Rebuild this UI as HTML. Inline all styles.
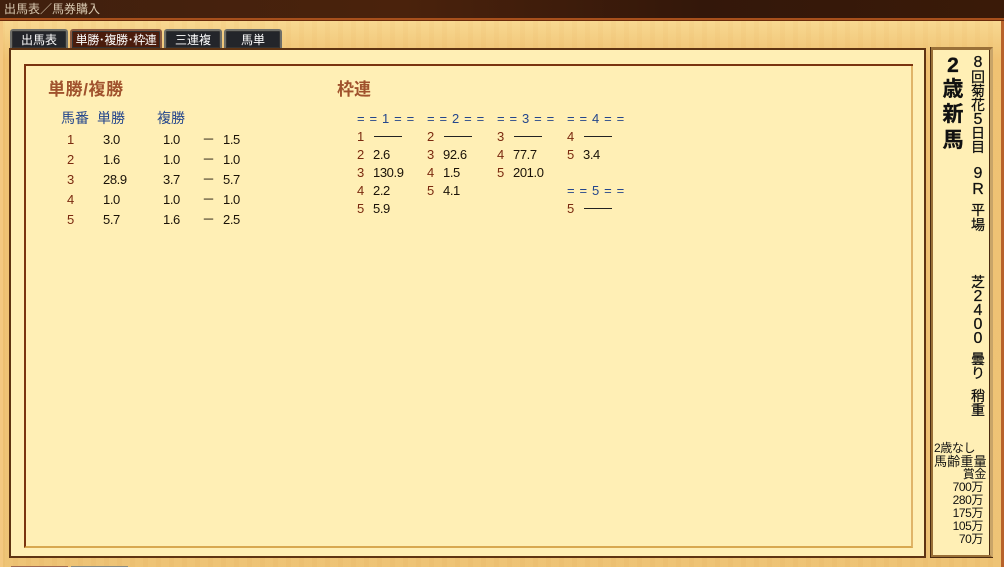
<!DOCTYPE html>
<html lang="ja">
<head>
<meta charset="utf-8">
<style>
html,body{margin:0;padding:0;}
body{width:1004px;height:567px;overflow:hidden;position:relative;background:#efc070;font-family:"Liberation Sans","Noto Sans CJK JP",sans-serif;font-size:13px;color:#1a1208;}
div{position:absolute;box-sizing:border-box;}
.t{white-space:nowrap;line-height:14px;letter-spacing:-.4px;}
.b{color:#24468c;}
.hd{font-size:14px;letter-spacing:0;}
.eq{font-size:13px;letter-spacing:.65px;}
.r{color:#7a2a10;letter-spacing:0;}
.h{font-size:17px;font-weight:bold;color:#a0522d;line-height:18px;white-space:nowrap;}
.tab{top:29px;height:19px;border-radius:3px 3px 0 0;color:#fff;text-align:center;line-height:18px;font-size:12px;white-space:nowrap;background:#23252a;border:2px solid #6e6e68;border-bottom:none;box-shadow:inset 0 0 0 1px #333;}
.ln{width:28px;height:1px;background:#222;}
.v{left:966px;width:24px;text-align:center;font-size:14px;line-height:14px;color:#111;-webkit-text-stroke:.25px #111;}
.d{font-size:16px;margin-top:1px;}
.v2{left:940px;width:26px;text-align:center;font-size:21px;font-weight:bold;line-height:24px;color:#111;-webkit-text-stroke:.3px #111;}
.s{font-size:12px;line-height:13px;white-space:nowrap;color:#111;letter-spacing:-.4px;}
</style>
</head>
<body>
<div style="left:0;top:0;width:1004px;height:567px;background:repeating-linear-gradient(90deg,rgba(190,120,40,.03) 0 5px,rgba(255,240,190,.03) 5px 13px),linear-gradient(180deg,#f8d890 20px,#efc070 60px,#eec274 100%);"></div>
<div style="left:0;top:0;width:1004px;height:18px;background:linear-gradient(90deg,#40200e,#4a220c 40%,#33170a 70%,#3a1a08);"></div>
<div style="left:0;top:18px;width:1004px;height:3px;background:#a8501c;border-bottom:1px solid #6a2a0c;"></div>
<div class="t" style="left:4px;top:2px;color:#d8c8b0;font-size:12px;letter-spacing:0;">出馬表／馬券購入</div>
<div style="left:1001px;top:21px;width:3px;height:546px;background:#b8622a;"></div>
<div style="left:0;top:21px;width:3px;height:546px;background:#f4c880;"></div>

<!-- tabs -->
<div class="tab" style="left:10px;width:58px;">出馬表</div>
<div class="tab" style="left:70px;width:92px;background:#4a1c0c;border-color:#8a5a40;letter-spacing:-.4px;">単勝･複勝･枠連</div>
<div class="tab" style="left:164px;width:58px;">三連複</div>
<div class="tab" style="left:224px;width:58px;">馬単</div>

<!-- main panel -->
<div style="left:9px;top:48px;width:917px;height:510px;background:#ffefb5;border:2px solid #5e3312;"></div>
<div style="left:24px;top:64px;width:889px;height:484px;border:2px solid #7a3410;border-right:2px solid #e0b468;border-bottom:2px solid #d8a850;background:#ffefb5;"></div>
<div style="left:911px;top:64px;width:2px;height:2px;background:#7a3410;"></div>

<div class="h" style="left:48px;top:81px;letter-spacing:.6px;">単勝/複勝</div>
<div class="h" style="left:337px;top:81px;">枠連</div>

<div class="t b hd" style="left:61px;top:111px;">馬番</div>
<div class="t b hd" style="left:97px;top:111px;">単勝</div>
<div class="t b hd" style="left:157px;top:111px;">複勝</div>

<div class="t r" style="left:67px;top:133px;">1</div><div class="t" style="left:103px;top:133px;">3.0</div><div class="t" style="left:163px;top:133px;">1.0</div><div class="t" style="left:202px;top:133px;">－</div><div class="t" style="left:223px;top:133px;">1.5</div>
<div class="t r" style="left:67px;top:153px;">2</div><div class="t" style="left:103px;top:153px;">1.6</div><div class="t" style="left:163px;top:153px;">1.0</div><div class="t" style="left:202px;top:153px;">－</div><div class="t" style="left:223px;top:153px;">1.0</div>
<div class="t r" style="left:67px;top:173px;">3</div><div class="t" style="left:103px;top:173px;">28.9</div><div class="t" style="left:163px;top:173px;">3.7</div><div class="t" style="left:202px;top:173px;">－</div><div class="t" style="left:223px;top:173px;">5.7</div>
<div class="t r" style="left:67px;top:193px;">4</div><div class="t" style="left:103px;top:193px;">1.0</div><div class="t" style="left:163px;top:193px;">1.0</div><div class="t" style="left:202px;top:193px;">－</div><div class="t" style="left:223px;top:193px;">1.0</div>
<div class="t r" style="left:67px;top:213px;">5</div><div class="t" style="left:103px;top:213px;">5.7</div><div class="t" style="left:163px;top:213px;">1.6</div><div class="t" style="left:202px;top:213px;">－</div><div class="t" style="left:223px;top:213px;">2.5</div>

<!-- wakuren -->
<div class="t b eq" style="left:357px;top:112px;">= = 1 = =</div>
<div class="t b eq" style="left:427px;top:112px;">= = 2 = =</div>
<div class="t b eq" style="left:497px;top:112px;">= = 3 = =</div>
<div class="t b eq" style="left:567px;top:112px;">= = 4 = =</div>
<div class="t b eq" style="left:567px;top:184px;">= = 5 = =</div>

<div class="t r" style="left:357px;top:130px;">1</div><div class="ln" style="left:374px;top:136px;"></div>
<div class="t r" style="left:357px;top:148px;">2</div><div class="t" style="left:373px;top:148px;">2.6</div>
<div class="t r" style="left:357px;top:166px;">3</div><div class="t" style="left:373px;top:166px;">130.9</div>
<div class="t r" style="left:357px;top:184px;">4</div><div class="t" style="left:373px;top:184px;">2.2</div>
<div class="t r" style="left:357px;top:202px;">5</div><div class="t" style="left:373px;top:202px;">5.9</div>

<div class="t r" style="left:427px;top:130px;">2</div><div class="ln" style="left:444px;top:136px;"></div>
<div class="t r" style="left:427px;top:148px;">3</div><div class="t" style="left:443px;top:148px;">92.6</div>
<div class="t r" style="left:427px;top:166px;">4</div><div class="t" style="left:443px;top:166px;">1.5</div>
<div class="t r" style="left:427px;top:184px;">5</div><div class="t" style="left:443px;top:184px;">4.1</div>

<div class="t r" style="left:497px;top:130px;">3</div><div class="ln" style="left:514px;top:136px;"></div>
<div class="t r" style="left:497px;top:148px;">4</div><div class="t" style="left:513px;top:148px;">77.7</div>
<div class="t r" style="left:497px;top:166px;">5</div><div class="t" style="left:513px;top:166px;">201.0</div>

<div class="t r" style="left:567px;top:130px;">4</div><div class="ln" style="left:584px;top:136px;"></div>
<div class="t r" style="left:567px;top:148px;">5</div><div class="t" style="left:583px;top:148px;">3.4</div>
<div class="t r" style="left:567px;top:202px;">5</div><div class="ln" style="left:584px;top:208px;"></div>

<!-- right panel -->
<div style="left:930px;top:47px;width:63px;height:511px;background:#ffefb5;border:3px solid #9a7038;border-right-color:#c8a468;box-shadow:-1px 0 0 #4a2a10 inset;"></div>
<div style="left:930px;top:47px;width:1px;height:511px;background:#4a2a10;"></div>
<div style="left:930px;top:557px;width:63px;height:1px;background:#4a2a10;"></div>

<div class="v2" style="top:54px;">2</div>
<div class="v2" style="top:78px;">歳</div>
<div class="v2" style="top:103px;">新</div>
<div class="v2" style="top:129px;">馬</div>

<div class="v d" style="top:55px;">8</div>
<div class="v" style="top:70px;">回</div>
<div class="v" style="top:84px;">菊</div>
<div class="v" style="top:98px;">花</div>
<div class="v d" style="top:112px;">5</div>
<div class="v" style="top:126px;">日</div>
<div class="v" style="top:140px;">目</div>
<div class="v d" style="top:166px;">9</div>
<div class="v d" style="top:182px;">R</div>
<div class="v" style="top:203px;">平</div>
<div class="v" style="top:218px;">場</div>
<div class="v" style="top:275px;">芝</div>
<div class="v d" style="top:289px;">2</div>
<div class="v d" style="top:303px;">4</div>
<div class="v d" style="top:317px;">0</div>
<div class="v d" style="top:331px;">0</div>
<div class="v" style="top:352px;">曇</div>
<div class="v" style="top:366px;">り</div>
<div class="v" style="top:389px;">稍</div>
<div class="v" style="top:403px;">重</div>

<div class="s" style="left:934px;top:442px;">2歳なし</div>
<div class="s" style="left:934px;top:455px;font-size:13px;letter-spacing:.2px;">馬齢重量</div>
<div class="s" style="right:18px;top:468px;">賞金</div>
<div class="s" style="right:21px;top:481px;">700万</div>
<div class="s" style="right:21px;top:494px;">280万</div>
<div class="s" style="right:21px;top:507px;">175万</div>
<div class="s" style="right:21px;top:520px;">105万</div>
<div class="s" style="right:21px;top:533px;">70万</div>

<div style="left:11px;top:566px;width:57px;height:1px;background:#a06a50;"></div>
<div style="left:71px;top:566px;width:57px;height:1px;background:#8a8a80;"></div>
</body>
</html>
